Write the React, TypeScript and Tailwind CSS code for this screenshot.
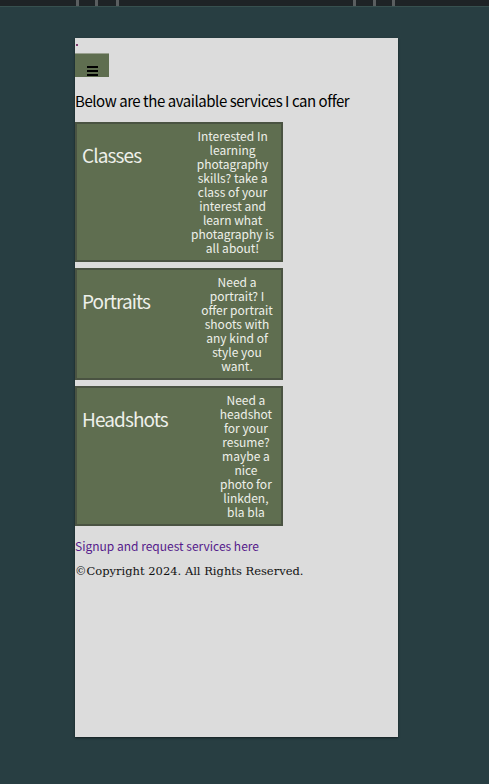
import React from "react";

const sans = { fontFamily: '"Noto Sans CJK KR", "Noto Sans", sans-serif' };

function Card({ title, children }: { title: string; children: React.ReactNode }) {
  return (
    <div className="flex items-start border-2 border-[#4a5342] bg-[#5f6e50] pl-[5px] pr-[5px]">
      <h2
        className="mt-[19px] mr-[48px] shrink-0 text-[19px] leading-[24px] tracking-[-0.9px] text-[#eef0ea]"
        style={sans}
      >
        {title}
      </h2>
      <p className="my-[5px] flex-1 text-center text-[12px] leading-[14px] text-[#eef0ea]" style={sans}>
        {children}
      </p>
    </div>
  );
}

export default function App() {
  const ticksL = [76, 95, 116];
  const ticksR = [353, 373, 392];
  return (
    <div className="min-h-[784px] w-[489px] bg-[#283e42] overflow-hidden">
      <div className="relative h-[7px] border-b border-[#37504f] bg-[#1e2326]">
        {[...ticksL, ...ticksR].map((x) => (
          <span key={x} className="absolute top-0 h-[6px] w-[3px] bg-[#5a5e60]" style={{ left: x }} />
        ))}
      </div>
      <div className="ml-[75px] mt-[31px] h-[699px] w-[323px] bg-[#dcdcdc] shadow-[0_1px_2px_rgba(0,0,0,0.5)]">
        <div className="h-[15px] pt-[6px] pl-[1px]">
          <span className="block h-[2px] w-[2px] bg-[#7a3a6a]" />
        </div>
        <div className="flex h-[24px] w-[34px] flex-col items-center justify-end gap-[2px] border-t border-[#9aa190] bg-[#5f6e50] pb-[1px]">
          <span className="block h-[2px] w-[11px] bg-black" />
          <span className="block h-[2px] w-[11px] bg-black" />
          <span className="block h-[2px] w-[11px] bg-black" />
        </div>
        <div className="mt-[14px] mb-[11px] text-[15px] leading-[20px] tracking-[-0.45px] text-black" style={sans}>
          Below are the available services I can offer
        </div>
        <div className="flex w-[208px] flex-col gap-[6px]">
          <Card title="Classes">
            Interested In learning photagraphy skills? take a class of your interest and learn what photagraphy is all
            about!
          </Card>
          <Card title="Portraits">Need a portrait? I offer portrait shoots with any kind of style you want.</Card>
          <Card title="Headshots">
            Need a headshot for your resume? maybe a nice <span className="whitespace-nowrap">photo for</span> linkden,
            bla bla
          </Card>
        </div>
        <a href="#" className="mt-[11px] block text-[12px] leading-[18px] text-[#551a8b]" style={sans}>
          Signup and request services here
        </a>
        <p
          className="mt-[7px] text-[11.5px] leading-[18px] text-[#111]"
          style={{ fontFamily: '"DejaVu Serif", "Liberation Serif", serif' }}
        >
          ©Copyright 2024. All Rights Reserved.
        </p>
      </div>
    </div>
  );
}
